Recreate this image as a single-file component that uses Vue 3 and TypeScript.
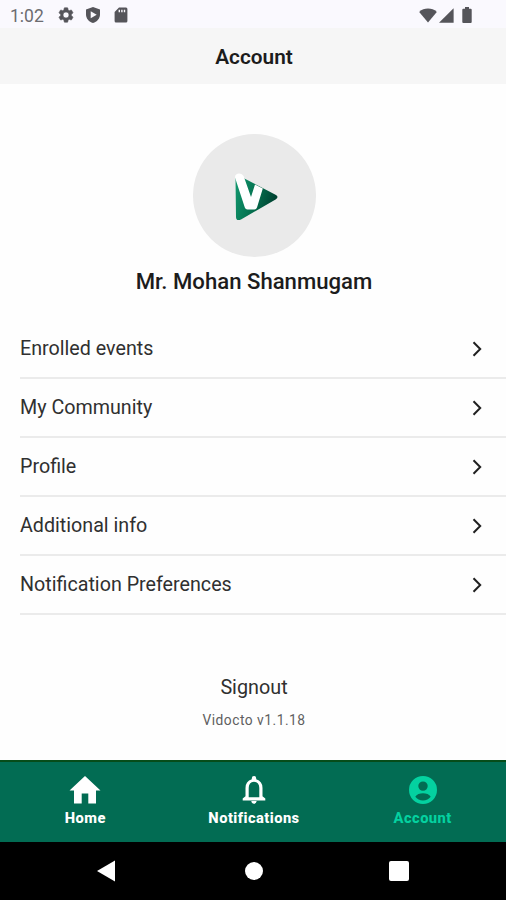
<script setup lang="ts">
interface MenuItem {
  label: string
}

const menu: MenuItem[] = [
  { label: 'Enrolled events' },
  { label: 'My Community' },
  { label: 'Profile' },
  { label: 'Additional info' },
  { label: 'Notification Preferences' },
]
</script>

<template>
  <div class="screen">
    <div class="status">
      <span class="clock">1:02</span>
      <svg class="gear" viewBox="0 0 24 24" width="18" height="18">
        <path fill-rule="evenodd" d="M19.14 12.94c.04-.3.06-.61.06-.94s-.02-.64-.07-.94l2.03-1.58a.49.49 0 0 0 .12-.61l-1.92-3.32a.49.49 0 0 0-.59-.22l-2.39.96c-.5-.38-1.03-.7-1.62-.94l-.36-2.54a.48.48 0 0 0-.48-.41h-3.84a.48.48 0 0 0-.47.41l-.36 2.54c-.59.24-1.13.57-1.62.94l-2.39-.96a.48.48 0 0 0-.59.22L2.74 8.87a.48.48 0 0 0 .12.61l2.03 1.58c-.05.3-.09.63-.09.94s.02.64.07.94l-2.03 1.58a.49.49 0 0 0-.12.61l1.92 3.32c.12.22.37.29.59.22l2.39-.96c.5.38 1.03.7 1.62.94l.36 2.54c.05.24.24.41.48.41h3.84c.24 0 .44-.17.47-.41l.36-2.54c.59-.24 1.13-.56 1.62-.94l2.39.96c.22.08.47 0 .59-.22l1.92-3.32a.48.48 0 0 0-.12-.61zM12 16a4 4 0 1 1 0-8 4 4 0 0 1 0 8z" />
      </svg>
      <svg class="shield" viewBox="0 0 16 18" width="16" height="18">
        <path fill-rule="evenodd" d="M8 1 15 3.600V8.500C15 12.500 12 15.900 8 17 4 15.900 1 12.500 1 8.500V3.600ZM5.700 5.200V12.200L11.700 8.700Z" />
      </svg>
      <svg class="card" viewBox="0 0 14 16" width="14" height="16">
        <path fill-rule="evenodd" d="M5 .5H12Q13.400.5 13.400 2V14Q13.400 15.500 12 15.500H2Q.6 15.500.6 14V5ZM4.600 2.800V5.200H6V2.800ZM7.200 2.800V5.200H8.600V2.800ZM9.800 2.800V5.200H11.200V2.800Z" />
      </svg>
      <div class="signals">
        <svg viewBox="0 0 18 15" width="18" height="15"><path d="M9 14.600.2 3.900Q4 .6 9 .6T17.800 3.900Z" /></svg>
        <svg viewBox="0 0 15 15" width="15" height="15"><path d="M14.600.2V14.800H0Z" /></svg>
        <svg class="battery" viewBox="0 0 10 16" width="10" height="16"><path d="M3 0H7V1.700H8.700Q9.700 1.700 9.700 2.700V15Q9.700 16 8.700 16H1.300Q.3 16 .3 15V2.700Q.3 1.700 1.300 1.700H3Z" /></svg>
      </div>
    </div>

    <header class="title">Account</header>

    <main class="content">
      <div class="avatar">
        <svg viewBox="0 0 46 50" width="46" height="50">
          <defs>
            <linearGradient id="leaf" x1="0" y1="0" x2="1" y2="0.300">
              <stop offset="0" stop-color="#129a70" />
              <stop offset="0.500" stop-color="#067653" />
              <stop offset="1" stop-color="#004432" />
            </linearGradient>
          </defs>
          <path fill="url(#leaf)" d="M2.500 5Q2.500 1 6.500 3L43 22Q46 24 43 26.300L8 46.500Q3 48.500 3 44Z" />
          <path class="letter" d="M2 4.500C1.500-.5 9-1 10.800 3.500L18 24 22 11.500 29.800 15.500 24 34.500Q23.300 36.500 21.500 36.500H14.500Q12.500 36.500 11.800 34.500Z" />
        </svg>
      </div>
      <h1 class="name">Mr. Mohan Shanmugam</h1>
      <ul class="menu">
        <li v-for="item in menu" :key="item.label" class="row">
          <span>{{ item.label }}</span>
          <svg viewBox="0 0 10 16" width="10" height="16"><path d="M1.500 1.300 8.200 8 1.500 14.700" /></svg>
        </li>
      </ul>
      <div class="signout">Signout</div>
      <div class="version">Vidocto v1.1.18</div>
    </main>

    <nav class="tabs">
      <div class="tab home">
        <svg viewBox="0 0 32 28" width="32" height="28"><path d="M16 0 31.500 14.600H27V27.600H19.300V17.500H12.700V27.600H5V14.600H.5Z" /></svg>
        <span>Home</span>
      </div>
      <div class="tab notifications">
        <svg viewBox="0 0 24 28" width="24" height="28">
          <path fill-rule="evenodd" d="M12 0Q14.200 0 14.200 2.200V3.300Q20.500 5.200 20.500 12V20.200L23.300 22.400V24.400H.7V22.400L3.500 20.200V12Q3.500 5.200 9.800 3.300V2.200Q9.800 0 12 0ZM12 5.800Q6.700 6.200 6.700 12V21.300H17.300V12Q17.300 6.200 12 5.800ZM9.300 25H14.700Q14.300 27.800 12 27.800T9.300 25Z" />
        </svg>
        <span>Notifications</span>
      </div>
      <div class="tab account">
        <svg viewBox="0 0 28 28" width="28" height="28">
          <path fill-rule="evenodd" d="M14 0A14 14 0 1 1 14 28 14 14 0 0 1 14 0ZM14 5.400A4.700 4.700 0 1 0 14 14.800 4.700 4.700 0 0 0 14 5.400ZM6.300 20.700C8 23.100 10.900 24.500 14 24.500S20 23.100 21.700 20.700C20.500 18.300 17 17.200 14 17.200S7.500 18.300 6.300 20.700Z" />
        </svg>
        <span>Account</span>
      </div>
    </nav>

    <div class="system">
      <svg viewBox="0 0 18 22" width="18" height="22"><path d="M18 .5V21.500L0 11Z" /></svg>
      <svg viewBox="0 0 18 18" width="18" height="18"><circle cx="9" cy="9" r="9" /></svg>
      <svg viewBox="0 0 20 20" width="20" height="20"><rect width="20" height="20" rx="2" /></svg>
    </div>
  </div>
</template>

<style>
body {
  margin: 0;
  background: #fefefe;
}
</style>

<style scoped>
.screen {
  display: flex;
  flex-direction: column;
  width: 506px;
  height: 900px;
  overflow: hidden;
  box-sizing: border-box;
  background: #fefefe;
  color: #1c1c1c;
  font-family: Roboto, "Liberation Sans", sans-serif;
}
svg {
  display: block;
  flex: none;
}
.status {
  display: flex;
  align-items: center;
  height: 28px;
  padding: 2px 34px 0 10px;
  box-sizing: border-box;
  background: #faf9fe;
  color: #6c6c70;
  fill: #55555a;
}
.clock {
  width: 47px;
  padding-top: 2px;
  line-height: 24px;
  font-size: 17.500px;
}
.gear path {
  stroke: #55555a;
  stroke-width: 0.800;
}
.shield {
  margin-left: 10px;
}
.card {
  margin-left: 13px;
}
.signals {
  display: flex;
  align-items: center;
  margin-left: auto;
}
.signals svg + svg {
  margin-left: 2px;
}
.signals .battery {
  margin-left: 8px;
}
.title {
  height: 56px;
  background: #f6f6f6;
  line-height: 58px;
  text-align: center;
  font-size: 20.800px;
  font-weight: 600;
  padding-left: 2px;
}
.content {
  height: 676px;
  display: flex;
  flex-direction: column;
  align-items: center;
}
.avatar {
  width: 123px;
  height: 123px;
  margin: 49.500px 0 0 2px;
  border-radius: 50%;
  background: #eaeaea;
  display: flex;
  align-items: center;
  justify-content: center;
  padding: 5px 0 0 3px;
  box-sizing: border-box;
  flex: none;
}
.letter {
  fill: #fff;
}
.name {
  margin: 8.500px 0 0 2px;
  height: 32px;
  line-height: 32px;
  font-size: 22.150px;
  font-weight: 500;
  white-space: nowrap;
}
.menu {
  width: 486px;
  margin: 23px 0 0 20px;
  padding: 0;
  list-style: none;
}
.row {
  display: flex;
  align-items: center;
  justify-content: space-between;
  box-sizing: border-box;
  height: 59px;
  padding: 0 24px 0 0;
  border-bottom: 2px solid #ebebeb;
  font-size: 19.700px;
  color: #303030;
}
.row path {
  fill: none;
  stroke: #202020;
  stroke-width: 2;
}
.signout {
  margin: 58px 0 0 2px;
  line-height: 30px;
  font-size: 19.800px;
  color: #303030;
}
.version {
  margin-top: 7px;
  padding-left: 2px;
  line-height: 20px;
  font-size: 13.800px;
  letter-spacing: 0.500px;
  color: #606060;
}
.tabs {
  display: grid;
  grid-template-columns: repeat(3, 1fr);
  height: 82px;
  box-sizing: border-box;
  border-top: 2px solid #064c19;
  background: #026c53;
}
.tab {
  display: flex;
  flex-direction: column;
  align-items: center;
  padding: 14px 0 0 2px;
  color: #fff;
  fill: #fff;
  font-size: 14.700px;
  font-weight: 800;
  line-height: 20px;
  letter-spacing: 0.450px;
}
.tab span {
  margin-top: 4px;
}
.account {
  color: #04d1a0;
  fill: #04d1a0;
}
.system {
  display: flex;
  align-items: center;
  height: 58px;
  padding-left: 97px;
  background: #000;
  fill: #fff;
}
.system svg + svg {
  margin-left: 130px;
}
.system svg:last-child {
  margin-left: 126px;
}
</style>
